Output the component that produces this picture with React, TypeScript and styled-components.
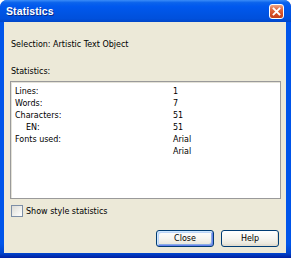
import React from "react";
import styled, { createGlobalStyle } from "styled-components";

const Global = createGlobalStyle`
  html, body { margin: 0; padding: 0; background: #ffffff; }
  body { font-family: "DejaVu Sans", "Liberation Sans", sans-serif; }
`;

const Window = styled.div`
  width: 291px;
  height: 258px;
  display: flex;
  flex-direction: column;
  box-sizing: border-box;
  background: linear-gradient(90deg, #0831d9 0px, #166aee 1px, #0055ea 3px, #0055ea 284px, #0845d0 289px, #001ea0 291px);
  border-radius: 7px 7px 0 0;
  overflow: hidden;
`;

const TitleBar = styled.div`
  height: 22px;
  flex: none;
  display: flex;
  align-items: center;
  justify-content: space-between;
  padding: 0 6px 0 6px;
  background: linear-gradient(180deg, #3a8cf8 0%, #0b63ec 12%, #0058ee 30%, #0054e3 60%, #0050dc 85%, #0046c8 100%);
`;

const Title = styled.span`
  font-family: "Liberation Sans", Arial, sans-serif;
  font-weight: bold;
  font-size: 10.5px;
  color: #ffffff;
  text-shadow: 1px 1px 0 #0a2a8a;
  letter-spacing: 0.1px;
`;

const CloseButton = styled.div`
  width: 15px;
  height: 15px;
  margin-top: 1px;
  margin-right: 1px;
  box-sizing: border-box;
  border: 1px solid #ffffff;
  border-radius: 3px;
  background: linear-gradient(180deg, #f0a585 0%, #e2683f 35%, #d24a22 75%, #c3401c 100%);
  display: flex;
  align-items: center;
  justify-content: center;
`;

const Frame = styled.div`
  flex: 1;
  display: flex;
  padding: 0 5px 5px 4px;
  border-bottom: 0;
  background: linear-gradient(180deg, #0055ea 0%, #0055ea 94%, #0044cc 98%, #001ea0 100%);
`;

const Body = styled.div`
  flex: 1;
  background: #ece9d8;
  display: flex;
  flex-direction: column;
  font-family: "DejaVu Sans", "Liberation Sans", sans-serif;
  font-size: 8px;
  color: #000000;
`;

const Label = styled.div<{ $top: number }>`
  margin: ${(p) => p.$top}px 0 0 7px;
  height: 12px;
  line-height: 12px;
  white-space: nowrap;
`;

const ListBox = styled.div`
  margin: 3px 5px 0 6px;
  height: 118px;
  box-sizing: border-box;
  background: #ffffff;
  border: 1px solid #9a9a9a;
  box-shadow: inset 1px 1px 0 #e4e2d8;
  padding: 4px 4px 0 4px;
  display: grid;
  grid-template-columns: 158px 1fr;
  grid-auto-rows: 12px;
  align-content: start;
`;

const Cell = styled.div<{ $indent?: boolean }>`
  line-height: 12px;
  white-space: nowrap;
  padding-left: ${(p) => (p.$indent ? 11 : 0)}px;
`;

const CheckRow = styled.div`
  margin: 6px 0 0 7px;
  height: 12px;
  display: flex;
  align-items: center;
  gap: 3px;
`;

const CheckBox = styled.div`
  width: 12px;
  height: 12px;
  box-sizing: border-box;
  border: 1px solid #7d8fa6;
  background: linear-gradient(135deg, #dcdcd6 0%, #f2f2ee 60%, #ffffff 100%);
`;

const ButtonRow = styled.div`
  margin: 13px 7px 0 0;
  display: flex;
  justify-content: flex-end;
  gap: 7px;
`;

const Button = styled.div<{ $default?: boolean }>`
  width: 58px;
  height: 17px;
  box-sizing: border-box;
  border: 1px solid #003c74;
  border-radius: 3px;
  background: linear-gradient(180deg, #ffffff 0%, #f6f5f0 50%, #ebe8dd 85%, #d6d0c5 100%);
  box-shadow: ${(p) =>
    p.$default
      ? "inset 1px 1px 0 #cee7ff, inset -1px -1px 0 #6982ee, inset 2px 2px 0 #bcd4f6, inset -2px -2px 0 #89ade4"
      : "inset -1px -1px 0 #e3ded0"};
  display: flex;
  align-items: center;
  justify-content: center;
  line-height: 12px;
`;

const rows: Array<[string, string, boolean?]> = [
  ["Lines:", "1"],
  ["Words:", "7"],
  ["Characters:", "51"],
  ["EN:", "51", true],
  ["Fonts used:", "Arial"],
  ["", "Arial"],
];

export default function App() {
  return (
    <>
      <Global />
      <Window>
        <TitleBar>
          <Title>Statistics</Title>
          <CloseButton>
            <svg width="9" height="9" viewBox="0 0 9 9">
              <path d="M1.5 1.5 L7.5 7.5 M7.5 1.5 L1.5 7.5" stroke="#ffffff" strokeWidth="1.8" strokeLinecap="square" />
            </svg>
          </CloseButton>
        </TitleBar>
        <Frame>
          <Body>
            <Label $top={17}>Selection: Artistic Text Object</Label>
            <Label $top={15}>Statistics:</Label>
            <ListBox>
              {rows.map(([k, v, indent], i) => (
                <React.Fragment key={i}>
                  <Cell $indent={indent}>{k}</Cell>
                  <Cell>{v}</Cell>
                </React.Fragment>
              ))}
            </ListBox>
            <CheckRow>
              <CheckBox />
              <span>Show style statistics</span>
            </CheckRow>
            <ButtonRow>
              <Button $default>Close</Button>
              <Button>Help</Button>
            </ButtonRow>
          </Body>
        </Frame>
      </Window>
    </>
  );
}
